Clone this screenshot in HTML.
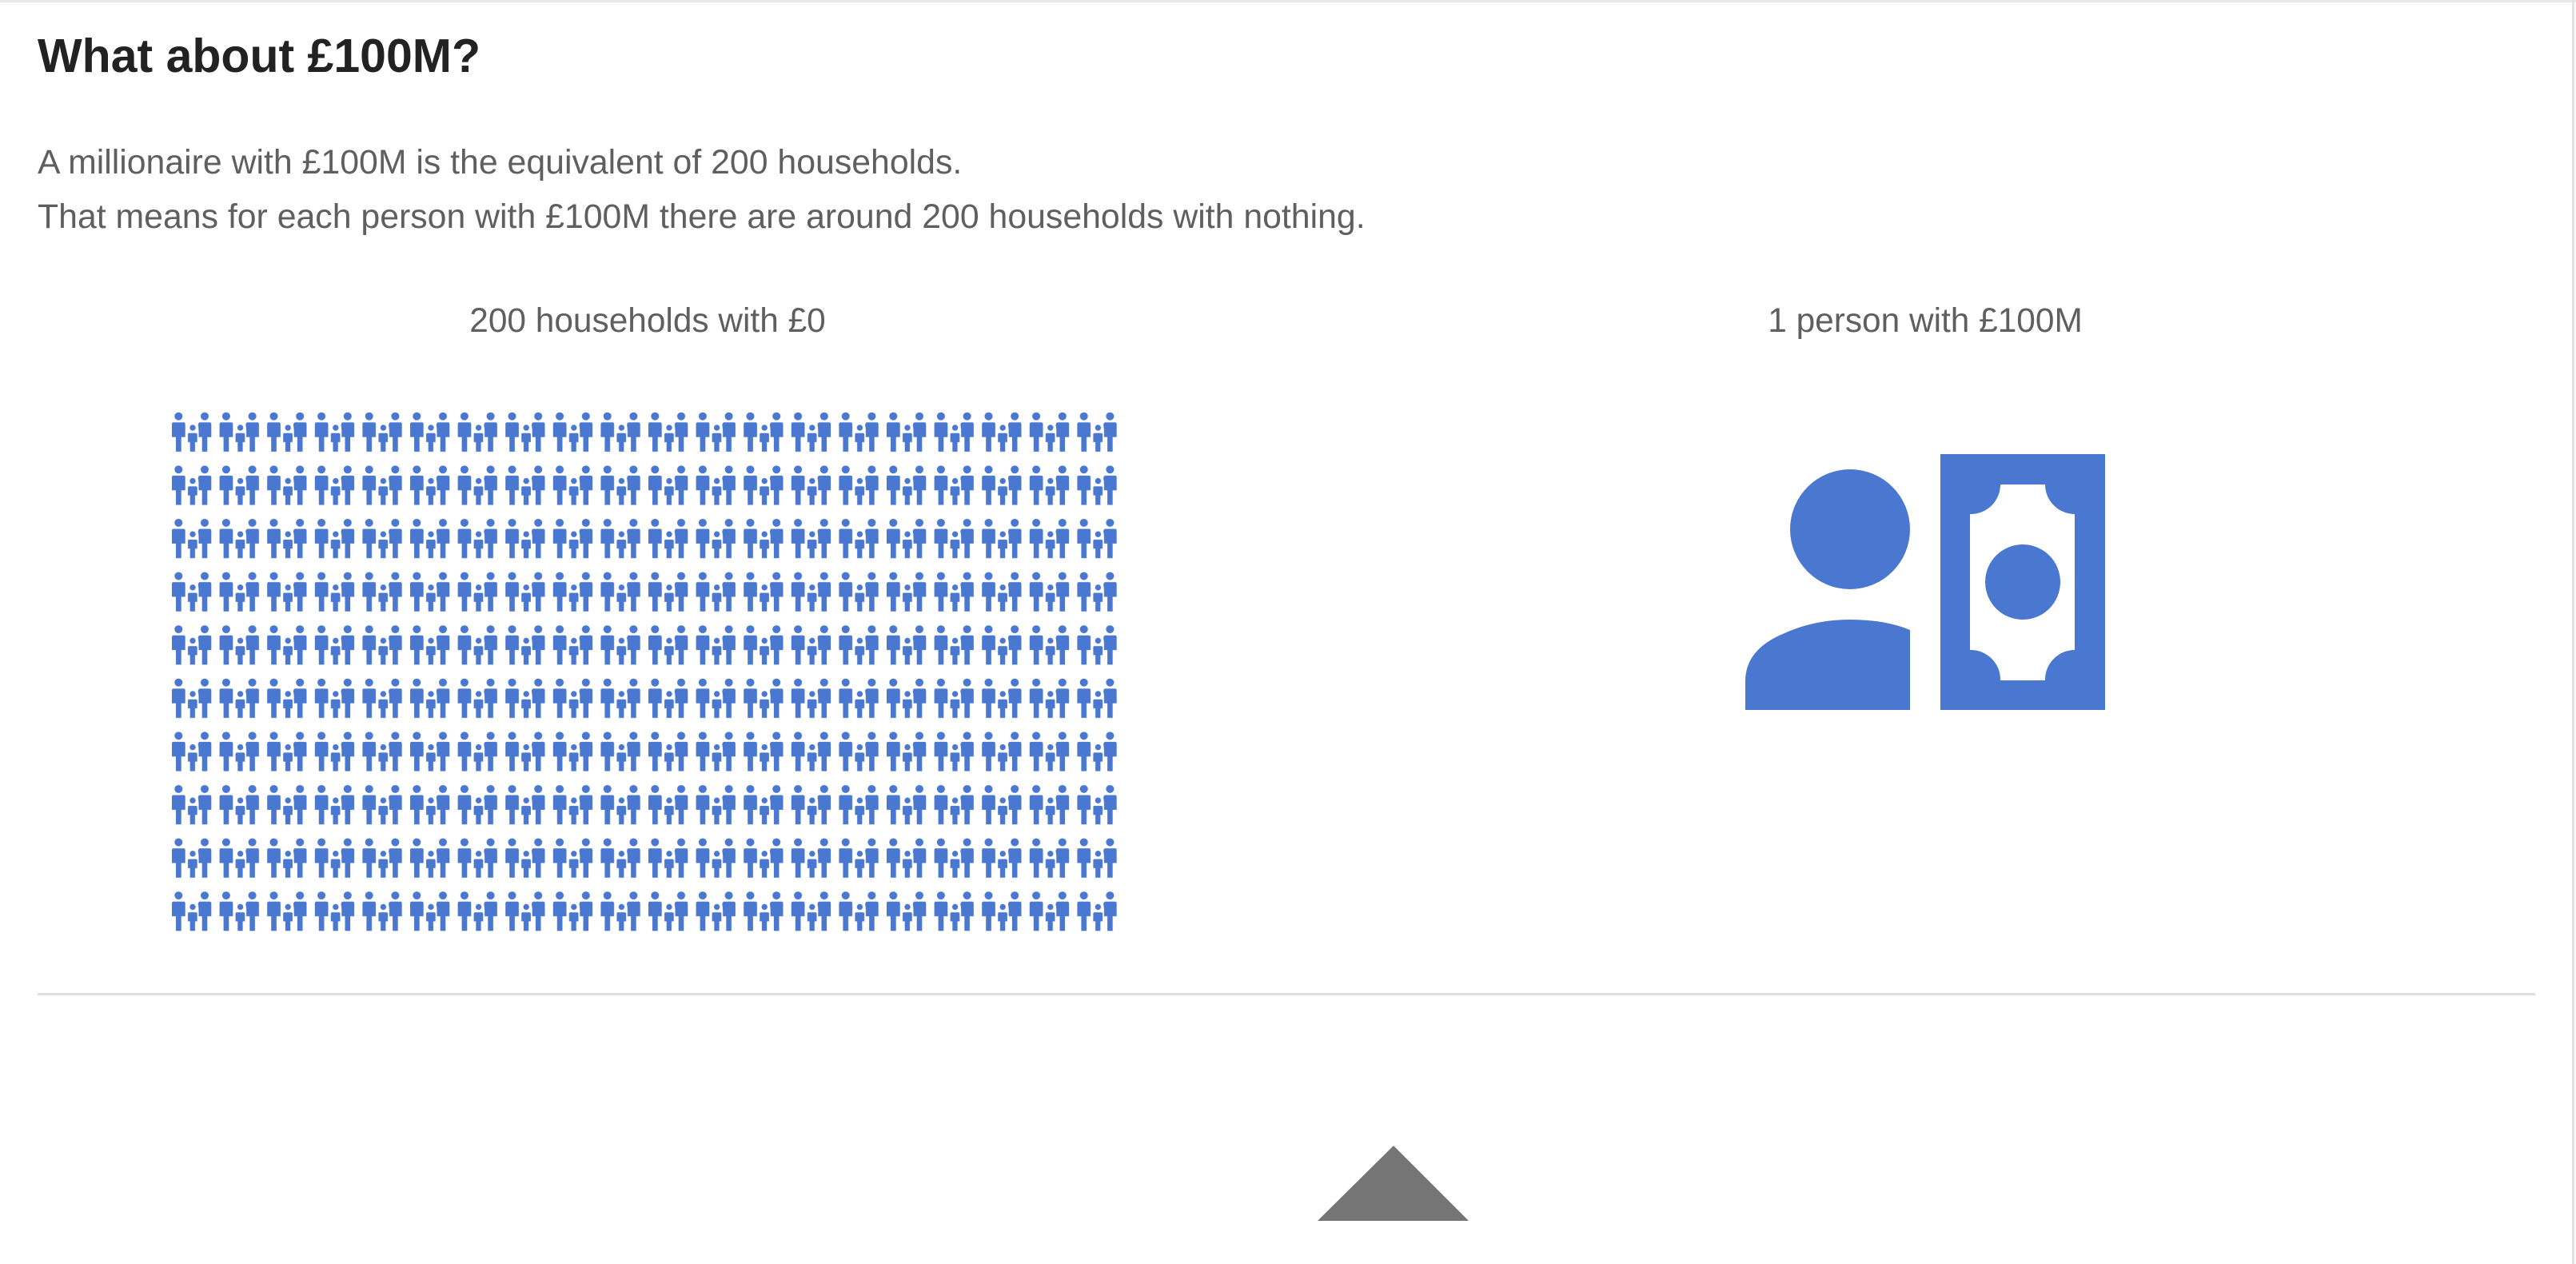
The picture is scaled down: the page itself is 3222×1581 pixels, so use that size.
<!DOCTYPE html>
<html><head><meta charset="utf-8"><style>
html,body{margin:0;padding:0;background:#fff;}
body{width:3222px;height:1581px;position:relative;overflow:hidden;font-family:"Liberation Sans",sans-serif;}
.t{position:absolute;white-space:nowrap;}
h1{position:absolute;left:47px;top:35px;margin:0;font-size:59px;font-weight:bold;color:#222;line-height:70px;}
.p{left:47px;font-size:42.8px;color:#5f5f5f;line-height:50px;}
.c{font-size:42.4px;color:#5f5f5f;line-height:50px;transform:translateX(-50%);}
</style></head><body>
<div style="position:absolute;left:0;top:0;width:3222px;height:3px;background:#e8e8ec"></div>
<div style="position:absolute;left:3217px;top:0;width:3px;height:1581px;background:#e2e2e2"></div>
<h1>What about £100M?</h1>
<div class="t p" style="top:178px">A millionaire with £100M is the equivalent of 200 households.</div>
<div class="t p" style="top:246px">That means for each person with £100M there are around 200 households with nothing.</div>
<div class="t c" style="left:810px;top:376px">200 households with £0</div>
<div class="t c" style="left:2408px;top:376px">1 person with £100M</div>
<svg style="position:absolute;left:0;top:0" width="3222" height="1581">
<defs>
<pattern id="fam" x="215" y="515" width="59.6" height="66.6" patternUnits="userSpaceOnUse">
<g fill="#4a77cf">
<circle cx="8.3" cy="5.7" r="5"/>
<path d="M2,13.3 H14.7 Q16.7,13.3 16.7,15.5 V31.7 H11.7 V50 H5 V31.7 H0 V15.5 Q0,13.3 2,13.3Z"/>
<circle cx="26" cy="20" r="3.7"/>
<path d="M21.5,26.7 H30 Q31.7,26.7 31.7,28.5 V38 H29 V50 H22.7 V38 H20 V28.5 Q20,26.7 21.5,26.7Z"/>
<circle cx="41" cy="5.7" r="5"/>
<path d="M35,13.3 H47.3 Q49.3,13.3 49.3,15.5 V31.7 H44.3 V50 H37.7 V31.7 H33.5 V25 Q33.5,20 32.7,17 Q33,13.3 35,13.3Z"/>
</g>
</pattern>
</defs>
<rect x="215" y="515" width="1192" height="650" fill="url(#fam)"/>
<circle cx="2314" cy="662" r="75" fill="#4a77cf"/>
<path d="M2183,888 V852 Q2183,812 2232,792 Q2270,775 2314,775 Q2358,775 2389,788 V888 Z" fill="#4a77cf"/>
<path fill="#4a77cf" fill-rule="evenodd" d="M2427,568 H2633 V888 H2427 Z M2502,606 H2558 A37,37 0 0 0 2595,643 V813 A37,37 0 0 0 2558,851 H2502 A37,37 0 0 0 2464,813 V643 A37,37 0 0 0 2502,606 Z"/>
<circle cx="2530" cy="728" r="47" fill="#4a77cf"/>
<rect x="47" y="1242" width="3124" height="3" fill="#dedede"/>
<polygon points="1648,1527 1743,1433 1837,1527" fill="#757575"/>
</svg>
</body></html>
